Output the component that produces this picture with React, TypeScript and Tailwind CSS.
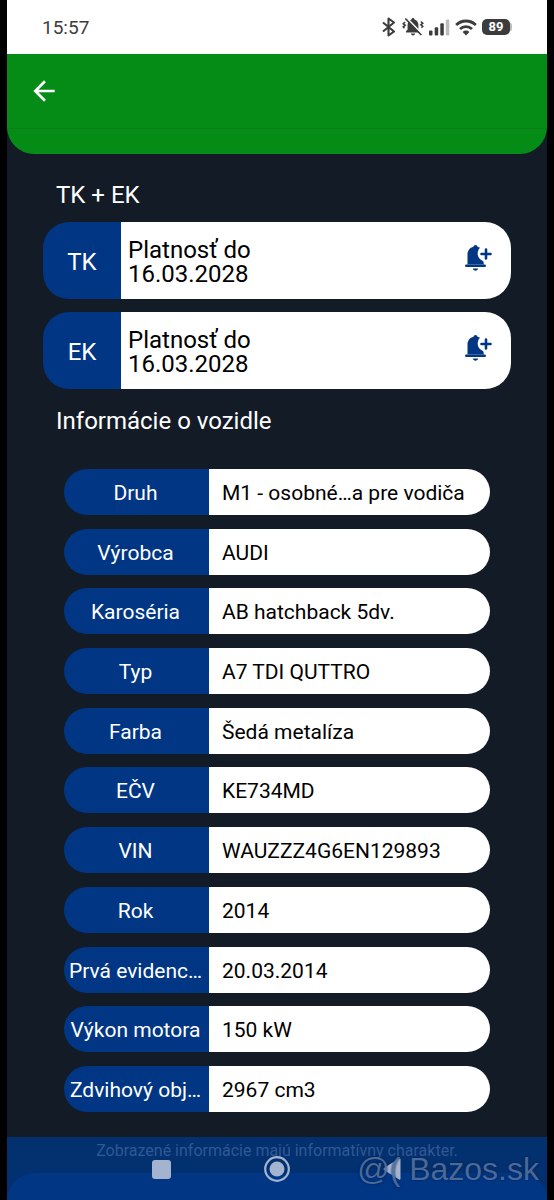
import { MdArrowBack } from 'react-icons/md';

interface InspectionI {
  code: string;
  validUntil: string;
}

interface DetailI {
  label: string;
  value: string;
}

const inspections: InspectionI[] = [
  { code: 'TK', validUntil: '16.03.2028' },
  { code: 'EK', validUntil: '16.03.2028' },
];

const details: DetailI[] = [
  { label: 'Druh', value: 'M1 - osobné…a pre vodiča' },
  { label: 'Výrobca', value: 'AUDI' },
  { label: 'Karoséria', value: 'AB hatchback 5dv.' },
  { label: 'Typ', value: 'A7 TDI QUTTRO' },
  { label: 'Farba', value: 'Šedá metalíza' },
  { label: 'EČV', value: 'KE734MD' },
  { label: 'VIN', value: 'WAUZZZ4G6EN129893' },
  { label: 'Rok', value: '2014' },
  { label: 'Prvá evidenc…', value: '20.03.2014' },
  { label: 'Výkon motora', value: '150 kW' },
  { label: 'Zdvihový obj…', value: '2967 cm3' },
];

const BluetoothIcon = () => (
  <svg width="15" height="20" viewBox="0 0 15 20" fill="none" stroke="#3c3c3c" strokeWidth="2.1" aria-hidden="true">
    <path d="M1 5.500l11 9-5.500 4V1.500l5.500 4-11 9" strokeLinejoin="round" />
  </svg>
);

const MutedBellIcon = () => (
  <svg width="22" height="20" viewBox="0 0 22 20" fill="none" aria-hidden="true">
    <path
      d="M11 1c-.9 0-1.500.6-1.500 1.500C7 3.100 5.600 5.200 5.600 7.800v4.600L4 14.300v1.200h14v-1.200l-1.600-1.900V7.800c0-2.600-1.400-4.700-3.900-5.300 0-.9-.6-1.500-1.500-1.500z"
      fill="#3c3c3c"
    />
    <path d="M9 16.500h4c0 1.200-.9 2-2 2s-2-.8-2-2z" fill="#3c3c3c" />
    <path d="M5 1.300l15 15.500" stroke="#fff" strokeWidth="1.800" />
    <path d="M3.300 1.500l16 16.500" stroke="#3c3c3c" strokeWidth="1.700" />
    <path
      d="M3.200 5L1.200 6.700l2 1.600-2 1.600 1.300 1.300M18.800 4.500l2 1.700-2 1.600 2 1.600-1.300 1.300"
      stroke="#3c3c3c"
      strokeWidth="1.500"
    />
  </svg>
);

const SignalIcon = () => (
  <svg width="21" height="17" viewBox="0 0 21 17" fill="#3c3c3c" aria-hidden="true">
    <rect x="0" y="11.500" width="3.500" height="5" rx="1" />
    <rect x="5.700" y="8.300" width="3.500" height="8.200" rx="1" />
    <rect x="11.300" y="4.300" width="3.500" height="12.200" rx="1" />
    <rect x="16.800" y="0.500" width="3.500" height="16" rx="1" fill="#bdbdbd" />
  </svg>
);

const WifiIcon = () => (
  <svg width="22" height="17" viewBox="0 0 22 17" fill="none" stroke="#3c3c3c" aria-hidden="true">
    <path d="M1.200 6a14 14 0 0 1 19.600 0" strokeWidth="2.900" />
    <path d="M5 10.100a8.600 8.600 0 0 1 12 0" strokeWidth="2.800" />
    <path d="M11 16.500L7.600 13a4.800 4.800 0 0 1 6.800 0z" fill="#3c3c3c" stroke="none" />
  </svg>
);

const BellPlusIcon = () => (
  <svg width="28" height="28" viewBox="0 0 28 28" fill="#003683" aria-hidden="true">
    <path d="M11.500 1c1 0 1.800.7 2 1.800.9.200 1.700.5 2.500 1A8 8 0 0 0 19 17q.8.600.8 3.500H3.500V10.500c0-3.700 2.300-6.800 6-7.700.2-1.100 1-1.800 2-1.800z" />
    <rect x="1" y="20.500" width="21" height="2.400" rx="1.200" />
    <path d="M8.800 24.500h5.400c-.4 1.400-1.400 2.200-2.700 2.200s-2.300-.8-2.700-2.200z" />
    <path d="M22 5.500v9M17.500 10h9" stroke="#003683" strokeWidth="2.600" strokeLinecap="round" />
  </svg>
);

const StatusBar = () => (
  <header className="flex h-[54px] items-center justify-between bg-white pr-[35px] pl-[35px] text-[#3c3c3c]">
    <time className="pt-px text-[19px] leading-6">15:57</time>
    <div className="flex items-center gap-[5px]">
      <BluetoothIcon />
      <MutedBellIcon />
      <SignalIcon />
      <WifiIcon />
      <div className="flex items-center">
        <span className="flex h-4 w-7 items-center justify-center rounded-[5px] bg-[#3c3c3c] text-[13px] leading-4 font-bold text-white">
          89
        </span>
        <span className="h-2 w-[2px] rounded-r-sm bg-[#bdbdbd]" />
      </div>
    </div>
  </header>
);

const InspectionCard = ({ code, validUntil }: InspectionI) => (
  <div className="flex h-[77px]">
    <div className="flex w-[78px] shrink-0 items-center justify-center rounded-l-[26px] bg-[#003683] pt-[2px] text-2xl text-white">
      {code}
    </div>
    <div className="flex flex-1 items-center justify-between rounded-r-[26px] bg-white pr-[19px] pl-[7px]">
      <p className="pt-[3px] text-2xl leading-6">
        Platnosť do
        <br />
        {validUntil}
      </p>
      <button type="button" aria-label={`Pridať upozornenie ${code}`} className="mb-[6px]">
        <BellPlusIcon />
      </button>
    </div>
  </div>
);

const DetailRow = ({ label, value }: DetailI) => (
  <div className="flex h-[46px] text-[21px] leading-7">
    <dt className="flex w-[145px] shrink-0 items-center justify-center rounded-l-full bg-[#003683] pt-[2px] pr-[2px] whitespace-nowrap text-white">
      {label}
    </dt>
    <dd className="flex flex-1 items-center rounded-r-full bg-white pt-[2px] pl-[13px] whitespace-nowrap">{value}</dd>
  </div>
);

const BottomBar = () => (
  <footer className="relative mt-[25px] overflow-hidden bg-[#03306f]">
    <p className="pt-1 text-center text-base leading-5 text-[#2f5896]">Zobrazené informácie majú informatívny charakter.</p>
    <div className="mt-3 h-[27px] rounded-t-[27px] bg-[#003683]" />
    {/* system navigation */}
    <nav className="absolute inset-x-0 top-[19px] grid grid-cols-[1fr_26px_1fr] items-center">
      <button type="button" aria-label="Posledné aplikácie" className="mr-[93px] justify-self-end">
        <svg width="19" height="19" viewBox="0 0 19 19" fill="#a3b3d0">
          <rect width="19" height="19" rx="3" />
        </svg>
      </button>
      <button type="button" aria-label="Domov">
        <svg width="26" height="26" viewBox="0 0 26 26" fill="#a3b3d0">
          <circle cx="13" cy="13" r="11.800" fill="none" stroke="#a3b3d0" strokeWidth="2.200" />
          <circle cx="13" cy="13" r="7.500" />
        </svg>
      </button>
      <button type="button" aria-label="Späť" className="ml-[93px] justify-self-start">
        <svg width="18" height="22" viewBox="0 0 18 22" fill="#a3b3d0">
          <path d="M16 .5q1.500-.5 1.500 1v19q0 1.500-1.500 1L1 12q-1-1 0-2z" />
        </svg>
      </button>
    </nav>
    <span className="absolute top-[14px] right-2 text-[32px] leading-9 font-[Liberation_Sans,sans-serif] whitespace-nowrap text-[#7f9cc6]/60 [text-shadow:0_0_2px_#001c4d]">
      @( Bazos.sk
    </span>
  </footer>
);

export default function App() {
  return (
    <div className="min-h-screen bg-black px-[7px] font-[Roboto,sans-serif] text-black">
      <div className="bg-[#131b26]">
        <StatusBar />
        <div className="rounded-b-[27px] bg-[#058c17]">
          <div className="flex h-[75px] items-center border-b border-[#0a8018] pl-[21px]">
            <button type="button" aria-label="Späť" className="text-white">
              <MdArrowBack size={32} />
            </button>
          </div>
          <div className="h-[25px]" />
        </div>
        <main className="px-9 pt-[25px]">
          <h2 className="pl-[13px] text-2xl leading-8 text-white">TK + EK</h2>
          <div className="mt-[11px] flex flex-col gap-[13px]">
            {inspections.map((item) => (
              <InspectionCard key={item.code} {...item} />
            ))}
          </div>
          <h2 className="mt-4 pl-[13px] text-2xl leading-8 text-white">Informácie o vozidle</h2>
          <dl className="mx-[21px] mt-8 flex min-h-[643px] flex-col justify-between">
            {details.map((item) => (
              <DetailRow key={item.label} {...item} />
            ))}
          </dl>
        </main>
        <BottomBar />
      </div>
    </div>
  );
}
